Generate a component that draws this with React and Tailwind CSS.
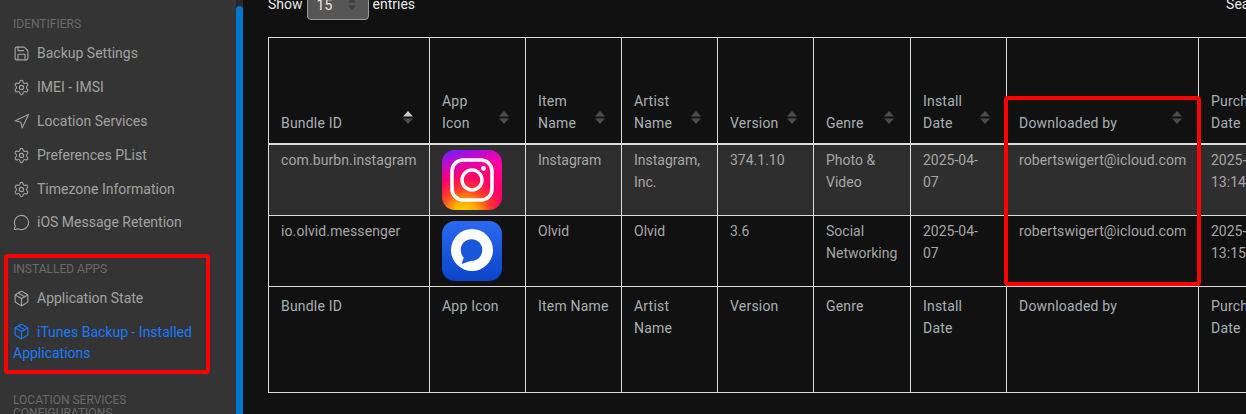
import React from 'react';
import { Save, Settings, Navigation, MessageCircle, Package } from 'lucide-react';

const navTop = [
  { label: 'Backup Settings', icon: Save },
  { label: 'IMEI - IMSI', icon: Settings },
  { label: 'Location Services', icon: Navigation },
  { label: 'Preferences PList', icon: Settings },
  { label: 'Timezone Information', icon: Settings },
  { label: 'iOS Message Retention', icon: MessageCircle },
];

const columns = [
  { title: 'Bundle ID', width: 'w-[161px]', active: true, cls: 'px-3' },
  { title: 'App Icon', width: 'w-[96px]', cls: 'px-3' },
  { title: 'Item Name', width: 'w-[96px]', cls: 'px-3' },
  { title: 'Artist Name', width: 'w-[96px]', cls: 'px-3' },
  { title: 'Version', width: 'w-[96px]', cls: 'px-3' },
  { title: 'Genre', width: 'w-[97px]', cls: 'px-3' },
  { title: 'Install Date', width: 'w-[96px]', cls: 'pl-3 pr-[16px]' },
  { title: 'Downloaded by', width: 'w-[192px]', cls: 'px-3' },
  { title: 'Purchase Date', width: 'w-[96px]', cls: 'px-3' },
];

const rows = [
  {
    id: 'com.burbn.instagram', icon: 'instagram', name: 'Instagram', artist: 'Instagram, Inc.', version: '374.1.10',
    genre: 'Photo & Video', date: '2025-04-07', by: 'robertswigert@icloud.com', purchase: '2025-04-07 13:14',
  },
  {
    id: 'io.olvid.messenger', icon: 'olvid', name: 'Olvid', artist: 'Olvid', version: '3.6',
    genre: 'Social Networking', date: '2025-04-07', by: 'robertswigert@icloud.com', purchase: '2025-04-07 13:15',
  },
];

function SortArrows({ active }) {
  return (
    <svg width="10" height="13" viewBox="0 0 10 13" className="block">
      <path d="M5 0 L10 5.5 H0 Z" fill={active ? '#c8c8c8' : '#4c4c4c'} />
      <path d="M5 13 L10 7.5 H0 Z" fill="#4c4c4c" />
    </svg>
  );
}

function InstagramIcon() {
  return (
    <svg width="60" height="60" viewBox="0 0 60 60" className="block">
      <defs>
        <radialGradient id="igBase" cx="0.38" cy="1.08" r="1.05">
          <stop offset="0" stopColor="#ffd600" />
          <stop offset="0.2" stopColor="#ffb000" />
          <stop offset="0.42" stopColor="#ff3a2c" />
          <stop offset="0.62" stopColor="#ff0068" />
          <stop offset="1" stopColor="#ff00a0" />
        </radialGradient>
        <linearGradient id="igTop" x1="0.25" y1="0" x2="0.4" y2="0.45">
          <stop offset="0" stopColor="#7a1cf8" />
          <stop offset="1" stopColor="#d400d0" stopOpacity="0" />
        </linearGradient>
      </defs>
      <rect width="60" height="60" rx="13" fill="url(#igBase)" />
      <rect width="60" height="60" rx="13" fill="url(#igTop)" />
      <rect x="10" y="10" width="40" height="40" rx="11" fill="none" stroke="#fff" strokeWidth="3.6" />
      <circle cx="30" cy="30" r="10" fill="none" stroke="#fff" strokeWidth="3.4" />
      <circle cx="41.5" cy="18.5" r="2.4" fill="#fff" />
    </svg>
  );
}

function OlvidIcon() {
  return (
    <svg width="60" height="60" viewBox="0 0 60 60" className="block">
      <defs>
        <linearGradient id="olvidBase" x1="0" y1="0" x2="0" y2="1">
          <stop offset="0" stopColor="#2a6af0" />
          <stop offset="1" stopColor="#0a45c8" />
        </linearGradient>
      </defs>
      <rect width="60" height="60" rx="13" fill="url(#olvidBase)" />
      <circle cx="30" cy="29" r="21" fill="#fff" />
      <circle cx="29.5" cy="29" r="10.8" fill="#1a56d8" />
      <path d="M22 36 L19.5 43 L30 39.5 Z" fill="#1a56d8" />
    </svg>
  );
}

function NavItem({ item }) {
  const Icon = item.icon;
  return (
    <div className="h-[33.8px] flex items-center gap-[7px] pl-[13px] text-[14px] text-[#a2a2a2]">
      <Icon size={17} strokeWidth={1.6} />
      <span>{item.label}</span>
    </div>
  );
}

export default function App() {
  return (
    <div className="w-[1246px] h-[414px] overflow-hidden flex bg-[#111111] font-['Roboto',sans-serif] relative">
      {/* sidebar */}
      <div className="w-[236px] shrink-0 bg-[#343434] pt-[17px] relative">
        <div className="pl-[13px] text-[12px] leading-[14px] text-[#6a6a6a] mb-[6px]">IDENTIFIERS</div>
        {navTop.map((item) => (
          <NavItem key={item.label} item={item} />
        ))}
        <div className="mt-[22px] pl-[13px] text-[12px] leading-[14px] text-[#6a6a6a] mb-[6px]">INSTALLED APPS</div>
        <NavItem item={{ label: 'Application State', icon: Package }} />
        <div className="pl-[13px] pt-[6px] text-[14px] leading-[21px] text-[#1a7aff]">
          <Package size={17} strokeWidth={1.6} className="inline-block mr-[7px] align-[-3px]" />
          iTunes Backup - Installed Applications
        </div>
        <div className="mt-[30px] pl-[13px] pr-4 text-[12px] leading-[13px] text-[#6a6a6a]">LOCATION SERVICES CONFIGURATIONS</div>
      </div>

      {/* scrollbar */}
      <div className="w-[7px] shrink-0 bg-[#26282e] pt-[6px]">
        <div className="h-full rounded-t-[4px] bg-[#0277cf]" />
      </div>

      {/* content */}
      <div className="flex-1 pl-[25px] min-w-0">
        <div className="h-[37px] -mt-[6px] flex text-[14px] text-[#e8e8e8]">
          <div className="flex items-start">
            <span className="leading-[21px] mr-[4px]">Show</span>
            <div className="w-[62px] h-[28px] -mt-[2px] rounded-[4px] border border-[#9a9a9a] bg-[#565656] relative pl-[9px] leading-[24px]">
              15
              <svg width="8" height="12" viewBox="0 0 8 12" className="absolute right-[12px] top-[5px]">
                <path d="M4 0 L8 4.5 H0 Z M4 12 L8 7.5 H0 Z" fill="#3d3d3d" />
              </svg>
            </div>
            <span className="leading-[21px] ml-[4px]">entries</span>
          </div>
          <span className="ml-auto leading-[21px] whitespace-nowrap pl-[811px]">Search:</span>
        </div>
        <div className="h-[6px]" />
        <table className="table-fixed w-[1000px] border-collapse text-[14px] leading-[22px] text-[#a6a6a6]">
          <thead>
            <tr className="h-[106px] border-b-2 border-[#dcdcdc]">
              {columns.map((c) => (
                <th key={c.title} className={`${c.width} ${c.cls} border border-[#dcdcdc] pb-[9px] align-bottom text-left font-normal tracking-[0.2px] text-[#a9b0b5]`}>
                  <div className="relative">
                    <span className={`block ${c.title === 'Install Date' ? 'pr-[12px]' : 'pr-[16px]'}`}>{c.title}</span>
                    {/* sort arrows sit over the header cell */}
                    <div className={`absolute bottom-[10px] ${c.title === 'Install Date' ? 'right-0' : 'right-[4px]'}`}>
                      <SortArrows active={c.active} />
                    </div>
                  </div>
                </th>
              ))}
            </tr>
          </thead>
          <tbody>
            {rows.map((r, i) => (
              <tr key={r.id} className={`h-[71px] ${i === 0 ? 'bg-[#2e2e2e]' : ''}`}>
                <td className="border border-[#dcdcdc] px-3 pt-[4px] align-top tracking-[0.1px]">{r.id}</td>
                <td className="border border-[#dcdcdc] px-3 pt-[5px] pb-[5px] align-top">
                  {r.icon === 'instagram' ? <InstagramIcon /> : <OlvidIcon />}
                </td>
                <td className="border border-[#dcdcdc] px-3 pt-[4px] align-top">{r.name}</td>
                <td className="border border-[#dcdcdc] px-3 pt-[4px] align-top">{r.artist}</td>
                <td className="border border-[#dcdcdc] px-3 pt-[4px] align-top">{r.version}</td>
                <td className="border border-[#dcdcdc] px-3 pt-[4px] align-top">{r.genre}</td>
                <td className="border border-[#dcdcdc] pl-3 pr-[16px] pt-[4px] align-top">{r.date}</td>
                <td className="border border-[#dcdcdc] px-3 pt-[4px] align-top whitespace-nowrap tracking-[0.09px]">{r.by}</td>
                <td className="border border-[#dcdcdc] px-3 pt-[4px] align-top">{r.purchase}</td>
              </tr>
            ))}
          </tbody>
          <tfoot>
            <tr className="h-[106px]">
              {columns.map((c) => (
                <th key={c.title} className={`${c.cls} border border-[#dcdcdc] pt-[8px] align-top text-left font-normal tracking-[0.2px] text-[#a9b0b5]`}>{c.title}</th>
              ))}
            </tr>
          </tfoot>
        </table>
      </div>

      {/* annotation boxes */}
      <div className="absolute left-[4px] top-[254px] w-[206px] h-[120px] rounded-[4px] border-[4px] border-[#ff0000]" />
      <div className="absolute left-[1004px] top-[96px] w-[197px] h-[190px] rounded-[4px] border-[4px] border-[#ff0000]" />
    </div>
  );
}
